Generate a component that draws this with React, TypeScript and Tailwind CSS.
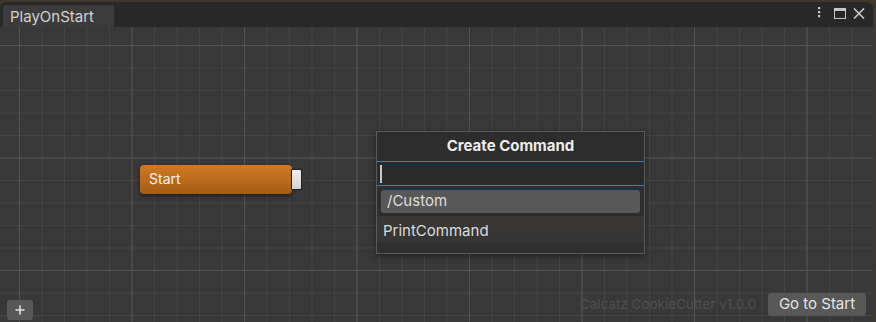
export default function App() {
  return (
    <div className="w-[876px] h-[322px] bg-[#40382a] pt-[2px] pr-[3px] overflow-hidden font-['Inter',sans-serif]">
      <div className="flex flex-col h-full rounded-t-[6px] overflow-hidden bg-[#282828]">
        {/* title bar */}
        <div className="flex items-end h-[25px] shrink-0 pl-[3px] pr-[8px]">
          <div className="flex items-center h-[22px] w-[111px] pl-[7px] rounded-tl-[4px] bg-[#3c3c3c] text-[15px] text-[#d2d2d2] leading-none">
            PlayOnStart
          </div>
          <div className="flex-1" />
          <div className="flex items-center gap-[7px] h-[25px] pb-[3px]">
            <svg width="4" height="12" viewBox="0 0 4 12" className="mr-[6px]">
              <rect x="1" y="0" width="2.2" height="2.2" fill="#c8c8c8" />
              <rect x="1" y="4" width="2.2" height="2.2" fill="#c8c8c8" />
              <rect x="1" y="8" width="2.2" height="2.2" fill="#c8c8c8" />
            </svg>
            <svg width="12" height="11" viewBox="0 0 12 11">
              <rect x="0.5" y="0.5" width="11" height="10" fill="none" stroke="#c8c8c8" />
              <rect x="0" y="0" width="12" height="3" fill="#c8c8c8" />
            </svg>
            <svg width="12" height="11" viewBox="0 0 12 11">
              <path d="M1 0.5 L11 10.5 M11 0.5 L1 10.5" stroke="#c8c8c8" strokeWidth="1.6" />
            </svg>
          </div>
        </div>

        {/* graph canvas */}
        <div className="relative flex-1 bg-[#383838] bg-[image:linear-gradient(to_right,#535353_1px,transparent_1px),linear-gradient(to_bottom,#535353_1px,transparent_1px),linear-gradient(to_right,#444444_1px,transparent_1px),linear-gradient(to_bottom,#444444_1px,transparent_1px)] bg-size-[112.5px_112.5px,112.5px_112.5px,22.5px_22.5px,22.5px_22.5px] bg-position-[19px_18px,19px_18px,19px_18px,19px_18px]">
          {/* Start node */}
          <div className="absolute left-[140px] top-[138px] flex items-center">
            <div className="flex items-center w-[152px] h-[29px] pl-[9px] pb-[2px] rounded-[4px] bg-[linear-gradient(to_bottom,#cf7a22,#a65c14)] shadow-[0_2px_4px_rgba(0,0,0,0.5)] text-[14px] text-[#f2f2f2]">
              Start
            </div>
            <div className="w-[11px] h-[21px] -ml-px rounded-r-[2px] border border-[#202020] bg-[linear-gradient(to_bottom,#f0f0f0,#d2d2d2)]" />
          </div>

          {/* Create Command popup */}
          <div className="absolute left-[376px] top-[104px] w-[269px] h-[123px] flex flex-col border border-[#5a5a5a] bg-[#2d2d2d] shadow-[0_2px_6px_rgba(0,0,0,0.4)]">
            <div className="flex items-center justify-center h-[29px] text-[15px] font-bold text-[#ececec]">
              Create Command
            </div>
            <div className="flex items-center h-[25px] border-t border-b border-t-[#3d7cc9] border-b-[#3d7cc9] bg-[#2a2a2a] pl-[3px]">
              <div className="w-[2px] h-[18px] bg-[#c8c8c8]" />
            </div>
            <div className="px-[4px] pt-[4px] pb-[3px]">
              <div className="flex items-center h-[23px] pl-[6px] rounded-[3px] bg-[#585858] text-[15px] text-[#dedede]">
                /Custom
              </div>
            </div>
            <div className="flex items-center h-[27px] pl-[6px] pt-[3px] bg-[linear-gradient(to_bottom,#3b3734,#353535)] text-[15px] text-[#dcdcdc]">
              PrintCommand
            </div>
            <div className="flex-1 bg-[#2f2f2f]" />
          </div>

          {/* bottom left add button */}
          <div className="absolute left-[7px] bottom-[2px] flex items-center justify-center w-[26px] h-[20px] rounded-[3px] bg-[#585858]">
            <svg width="10" height="10" viewBox="0 0 10 10">
              <path d="M5 0.5 V9.5 M0.5 5 H9.5" stroke="#e0e0e0" strokeWidth="1.6" />
            </svg>
          </div>

          {/* bottom right */}
          <div className="absolute right-[7px] bottom-[6px] flex items-center gap-[12px]">
            <span className="text-[13.5px] text-[#4f4f4f]">Calcatz CookieCutter v1.0.0</span>
            <div className="flex items-center justify-center w-[98px] h-[23px] rounded-[3px] bg-[#585858] text-[15px] text-[#e4e4e4]">
              Go to Start
            </div>
          </div>
        </div>
      </div>
    </div>
  );
}
